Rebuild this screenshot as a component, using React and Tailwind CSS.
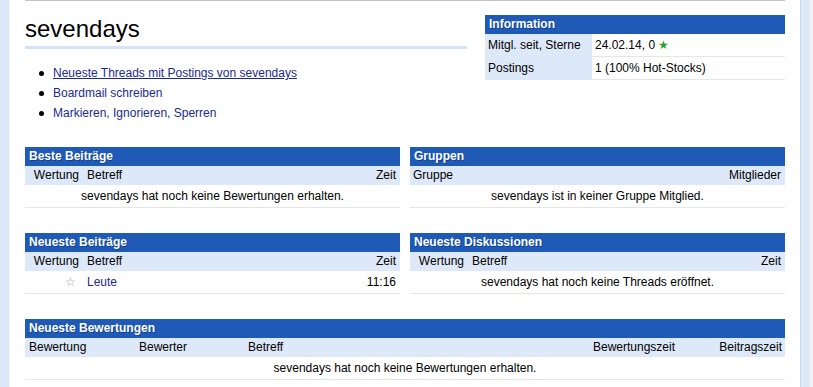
import React from "react"

const font = { fontFamily: '"Liberation Sans", Arial, sans-serif' }

function PanelHeader({ title }) {
  return (
    <div className="h-[19px] bg-[#1f5bb6] pl-[4px] text-[12px] leading-[19px] font-bold text-white [text-shadow:1px_1px_0_rgba(0,30,90,0.45)]">
      {title}
    </div>
  )
}

function EmptyRow({ text }) {
  return (
    <div className="h-[23px] border-b border-[#e6e6e6] text-center text-[12px] leading-[22px] text-black">
      {text}
    </div>
  )
}

function PostTable({ title, children }) {
  return (
    <div>
      <PanelHeader title={title} />
      <div className="flex h-[19px] bg-[#dde8f8] text-[12px] leading-[19px] text-black">
        <div className="w-[58px] pr-[4px] text-right">Wertung</div>
        <div className="flex-1 pl-[4px]">Betreff</div>
        <div className="pr-[4px]">Zeit</div>
      </div>
      {children}
    </div>
  )
}

export default function App() {
  return (
    <div className="flex min-h-screen bg-white" style={font}>
      {/* left strip */}
      <div className="w-[9px] bg-[#dde8f8]" />
      <div className="w-[1px] bg-[#eef3fb]" />

      <div className="w-[15px]" />

      {/* main */}
      <div className="w-[760px] border-t border-[#c4c4c4] pb-[6px]">
        {/* top section */}
        <div className="flex">
          <div className="w-[442px]">
            <h1 className="mt-[14px] border-b-[3px] border-[#d6e3f6] pb-[3px] text-[24px] leading-[28px] font-normal text-black">
              sevendays
            </h1>
            <ul className="mt-[14px] text-[12px] leading-[20px]">
              <li className="flex items-center">
                <span className="ml-[14px] h-[5px] w-[5px] rounded-full bg-black" />
                <a href="#" className="ml-[9px] text-[#1a2a8e] underline">
                  Neueste Threads mit Postings von sevendays
                </a>
              </li>
              <li className="flex items-center">
                <span className="ml-[14px] h-[5px] w-[5px] rounded-full bg-black" />
                <a href="#" className="ml-[9px] text-[#1a2a8e]">
                  Boardmail schreiben
                </a>
              </li>
              <li className="flex items-center">
                <span className="ml-[14px] h-[5px] w-[5px] rounded-full bg-black" />
                <span className="ml-[9px] text-[#1a2a8e]">
                  <a href="#">Markieren</a>, <a href="#">Ignorieren</a>,{" "}
                  <a href="#">Sperren</a>
                </span>
              </li>
            </ul>
          </div>

          <div className="ml-[18px] mt-[14px] w-[300px]">
            <PanelHeader title="Information" />
            <div className="flex text-[12px] text-black">
              <div className="w-[107px] bg-[#dde8f8] pl-[3px]">
                <div className="h-[23px] leading-[22px]">Mitgl. seit, Sterne</div>
                <div className="h-[23px] leading-[22px]">Postings</div>
              </div>
              <div className="flex-1">
                <div className="h-[23px] border-b border-[#e6e6e6] pl-[3px] leading-[22px]">
                  24.02.14, 0{" "}
                  <span className="text-[12px] text-[#2e9e2e]">★</span>
                </div>
                <div className="h-[23px] border-b border-[#e6e6e6] pl-[3px] leading-[22px]">
                  1 (100% Hot-Stocks)
                </div>
              </div>
            </div>
          </div>
        </div>

        {/* panels */}
        <div className="mt-[24px] grid grid-cols-2 gap-x-[10px] gap-y-[25px]">
          <PostTable title="Beste Beiträge">
            <EmptyRow text="sevendays hat noch keine Bewertungen erhalten." />
          </PostTable>

          <div>
            <PanelHeader title="Gruppen" />
            <div className="flex h-[19px] justify-between bg-[#dde8f8] text-[12px] leading-[19px] text-black">
              <div className="pl-[3px]">Gruppe</div>
              <div className="pr-[4px]">Mitglieder</div>
            </div>
            <EmptyRow text="sevendays ist in keiner Gruppe Mitglied." />
          </div>

          <PostTable title="Neueste Beiträge">
            <div className="flex h-[23px] border-b border-[#e6e6e6] text-[12px] leading-[22px]">
              <div className="w-[58px] pr-[7px] text-right text-[12px] text-[#9a9a9a]">☆</div>
              <a href="#" className="flex-1 pl-[4px] text-[#1a2a8e]">
                Leute
              </a>
              <div className="pr-[4px] text-black">11:16</div>
            </div>
          </PostTable>

          <PostTable title="Neueste Diskussionen">
            <EmptyRow text="sevendays hat noch keine Threads eröffnet." />
          </PostTable>
        </div>

        <div className="mt-[25px]">
          <PanelHeader title="Neueste Bewertungen" />
          <div className="grid h-[19px] grid-cols-[110px_109px_345px_127px_1fr] bg-[#dde8f8] text-[12px] leading-[19px] text-black">
            <div className="pl-[4px]">Bewertung</div>
            <div className="pl-[4px]">Bewerter</div>
            <div className="pl-[4px]">Betreff</div>
            <div className="pl-[4px]">Bewertungszeit</div>
            <div className="pr-[3px] text-right">Beitragszeit</div>
          </div>
          <EmptyRow text="sevendays hat noch keine Bewertungen erhalten." />
        </div>
      </div>

      <div className="w-[15px]" />

      {/* right strip */}
      <div className="w-[10px] border-l border-[#cbdaf0] bg-[#dde8f8]" />
      <div className="w-[3px] bg-[#f2f2f2]" />
    </div>
  )
}
